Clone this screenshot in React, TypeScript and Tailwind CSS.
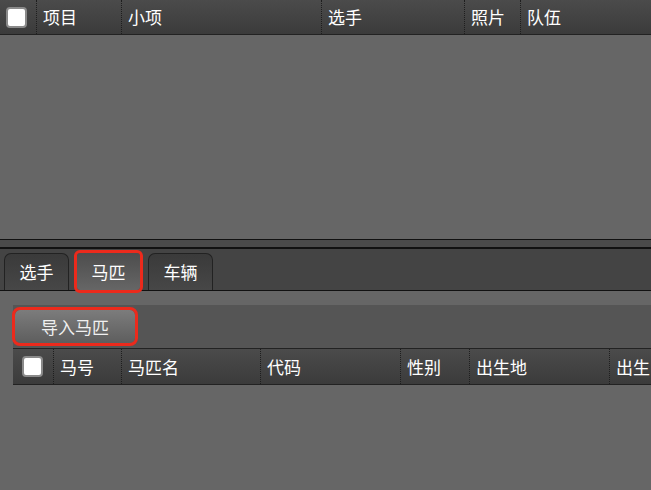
import React from "react";

const topCols = [
  { label: "项目", w: "w-[85px]" },
  { label: "小项", w: "w-[200px]" },
  { label: "选手", w: "w-[143px]" },
  { label: "照片", w: "w-[56px]" },
  { label: "队伍", w: "flex-1" },
];

const horseCols = [
  { label: "马号", w: "w-[68px]" },
  { label: "马匹名", w: "w-[139px]" },
  { label: "代码", w: "w-[140px]" },
  { label: "性别", w: "w-[69px]" },
  { label: "出生地", w: "w-[140px]" },
  { label: "出生", w: "w-[42px]" },
];

const Check = () => (
  <div className="w-[21px] h-[21px] rounded-[4px] bg-white border-2 border-[#8a8a8a]" />
);

const HeaderCell = ({ label, w }: { label: string; w: string }) => (
  <div className={`${w} shrink-0 h-full flex items-center pl-[6px] border-l border-dotted border-[#1e1e1e] whitespace-nowrap`}>
    {label}
  </div>
);

export default function App() {
  return (
    <div
      className="w-[651px] h-[490px] overflow-hidden bg-[#666666] text-white text-[17px] flex flex-col"
      style={{ fontFamily: '"Microsoft YaHei", "Noto Sans CJK SC", sans-serif' }}
    >
      {/* top grid */}
      <div className="h-[239px] shrink-0">
        <div className="h-[35px] flex bg-gradient-to-b from-[#4b4b4b] to-[#3b3b3b] border-b border-[#222]">
          <div className="w-[36px] shrink-0 flex items-center pl-[6px]">
            <Check />
          </div>
          {topCols.map((c) => (
            <HeaderCell key={c.label} {...c} />
          ))}
        </div>
      </div>

      {/* splitter */}
      <div className="h-[10px] shrink-0 bg-[#4a4a4a] border-t border-[#111] border-b-2 border-b-[#111]" />

      {/* tabs */}
      <div className="h-[42px] shrink-0 bg-[#444444] border-b border-[#111] flex items-end pl-[4px] gap-[5px]">
        <div className="w-[65px] h-[37px] rounded-t-[7px] border border-b-0 border-[#222] bg-gradient-to-b from-[#3a3a3a] to-[#474747] flex items-center justify-center">
          选手
        </div>
        <div className="w-[63px] h-[37px] mx-[3px] bg-gradient-to-b from-[#4d4d4d] to-[#666] outline-[3px] outline-solid outline-[#ec2a1c] rounded-[3px] flex items-center justify-center relative z-10">
          马匹
        </div>
        <div className="w-[65px] h-[37px] rounded-t-[7px] border border-b-0 border-[#222] bg-gradient-to-b from-[#3a3a3a] to-[#474747] flex items-center justify-center">
          车辆
        </div>
      </div>

      {/* content */}
      <div className="flex-1 pl-[13px] pt-[14px]">
        <div className="h-[43px] bg-[#555555] flex items-center pl-[2px]">
          <button className="w-[120px] h-[33px] rounded-[5px] bg-gradient-to-b from-[#7c7c7c] to-[#5e5e5e] outline-[3px] outline-solid outline-[#ec2a1c] text-[#f0f0f0] text-[17px]">
            导入马匹
          </button>
        </div>
        <div className="h-[37px] flex bg-gradient-to-b from-[#4b4b4b] to-[#3b3b3b] border-y border-[#222]">
          <div className="w-[40px] shrink-0 flex items-center pl-[9px]">
            <Check />
          </div>
          {horseCols.map((c) => (
            <HeaderCell key={c.label} {...c} />
          ))}
        </div>
      </div>
    </div>
  );
}
